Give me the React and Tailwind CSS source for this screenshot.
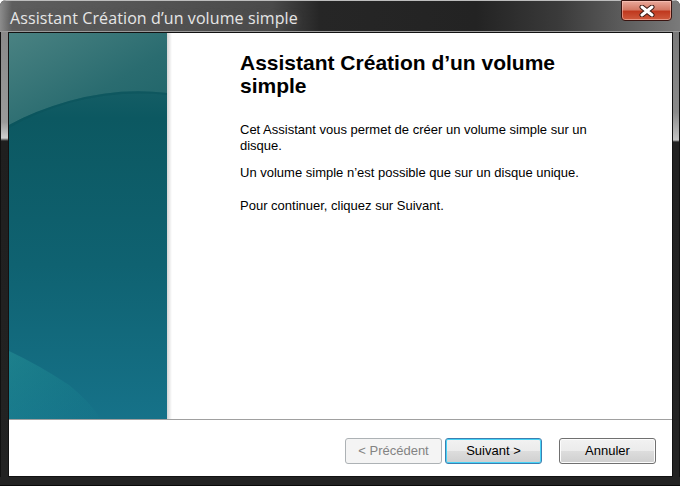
import React from 'react';

const winFont = { fontFamily: '"Liberation Sans", Arial, sans-serif' };

// ── Side panel drawing (teal glass) ─────────────────────────
function WizardArt() {
  return (
    <svg width="158" height="386" viewBox="0 0 158 386" className="block">
      <defs>
        <linearGradient id="base" x1="0" y1="0" x2="0" y2="1">
          <stop offset="0" stopColor="#25686d" />
          <stop offset="0.22" stopColor="#0c5861" />
          <stop offset="0.6" stopColor="#0f6271" />
          <stop offset="1" stopColor="#167289" />
        </linearGradient>
        <linearGradient id="top" x1="0" y1="0" x2="1" y2="1">
          <stop offset="0" stopColor="#4a8282" />
          <stop offset="0.6" stopColor="#2a6c70" />
          <stop offset="1" stopColor="#1e6469" />
        </linearGradient>
        <linearGradient id="low" x1="0" y1="0" x2="1" y2="1">
          <stop offset="0" stopColor="#2a9a9c" stopOpacity="0.45" />
          <stop offset="1" stopColor="#1a8f96" stopOpacity="0.05" />
        </linearGradient>
      </defs>
      <rect width="158" height="386" fill="url(#base)" />
      <path d="M0 0 H158 V60 Q110 54 60 68 Q25 78 0 92 Z" fill="url(#top)" />
      <path d="M0 92 Q25 78 60 68 Q110 54 158 60 V62 Q110 57 60 70 Q25 80 0 95 Z" fill="#0a5259" opacity="0.5" />
      <path d="M0 318 Q30 332 60 352 Q80 368 92 386 H0 Z" fill="url(#low)" />
    </svg>
  );
}

function CloseGlyph() {
  return (
    <svg width="16" height="12" viewBox="0 0 16 12">
      <path d="M3 2 L13 10 M13 2 L3 10" stroke="#3a1a14" strokeWidth="5" strokeLinecap="round" />
      <path d="M3 2 L13 10 M13 2 L3 10" stroke="#ffffff" strokeWidth="3" strokeLinecap="round" />
    </svg>
  );
}

function WinButton({ children, variant }) {
  const base = 'w-[97px] h-[26px] rounded-[3px] border text-[13px] flex items-center justify-center';
  if (variant === 'disabled')
    return <div className={`${base} border-[#adb2b5] bg-[#f4f4f4] text-[#838383]`}>{children}</div>;
  if (variant === 'default')
    return (
      <div className={`${base} border-[#3c7fb1] text-black bg-[linear-gradient(180deg,#f2f2f2_0%,#ebebeb_50%,#dddddd_50%,#cfcfcf_100%)] shadow-[inset_0_0_0_1px_#48d4f7]`}>
        {children}
      </div>
    );
  return (
    <div className={`${base} border-[#707070] text-black bg-[linear-gradient(180deg,#f2f2f2_0%,#ebebeb_50%,#dddddd_50%,#cfcfcf_100%)] shadow-[inset_0_0_0_1px_#fcfcfc]`}>
      {children}
    </div>
  );
}

export default function App() {
  return (
    <div className="w-[680px] h-[486px] flex flex-col bg-[#232323] rounded-t-[6px] overflow-hidden" style={winFont}>
      {/* ── Title bar ─────────────────────────────── */}
      <div className="h-[32px] flex items-start border-t border-[#bdbdbd] bg-[linear-gradient(90deg,#8c8c8c_0px,#5e5e5e_12px,#4a4a4a_40%,#262626_47%,#232323_70%,#3a3a3a_82%,#7a7a7a_100%)] border-b border-b-[#9a9a9a]">
        <div className="pl-[10px] pt-[5px] flex-1">
          <span
            className="text-[16px] text-[#e6e6e6] tracking-[0.1px]"
            style={{ fontFamily: '"Open Sans", sans-serif', textShadow: '0 0 6px #5a5a5a' }}
          >
            Assistant Création d’un volume simple
          </span>
        </div>
        <div className="mr-[8px] w-[51px] h-[21px] -mt-px rounded-b-[4px] border border-[#3a1410] flex items-center justify-center bg-[linear-gradient(180deg,#e9a99b_0%,#d47a66_45%,#c0391f_55%,#cf5b3e_100%)] shadow-[inset_0_0_0_1px_rgba(255,210,200,0.5)]">
          <CloseGlyph />
        </div>
      </div>

      {/* ── Body row ───────────────────────────────── */}
      <div className="h-[445px] flex">
        <div className="w-[8px] bg-[linear-gradient(180deg,#8a8a8a_0px,#9a9a9a_90px,#cfcfcf_106px,#1f1f1f_109px,#232323_100%)] border-l border-[#111]" />
        <div className="w-[665px] border border-[#121212] bg-white flex flex-col">
          <div className="h-[386px] flex">
            <WizardArt />
            <div className="w-[5px] bg-[linear-gradient(90deg,#d4d4d4,#ffffff)]" />
            <div className="flex-1 pl-[68px] pt-[18px] text-black">
              <h1 className="text-[21px] leading-[23px] font-bold w-[380px]">
                Assistant Création d’un volume simple
              </h1>
              <p className="mt-[25px] text-[13px] leading-[16px] w-[370px]">
                Cet Assistant vous permet de créer un volume simple sur un disque.
              </p>
              <p className="mt-[11px] text-[13px] leading-[16px]">
                Un volume simple n’est possible que sur un disque unique.
              </p>
              <p className="mt-[17px] text-[13px] leading-[16px]">Pour continuer, cliquez sur Suivant.</p>
            </div>
          </div>
          <div className="h-px bg-[#a0a0a0]" />
          <div className="flex-1 flex items-start justify-end pt-[18px] pr-[16px]">
            <WinButton variant="disabled">&lt; Précédent</WinButton>
            <div className="w-[3px]" />
            <WinButton variant="default">Suivant &gt;</WinButton>
            <div className="w-[17px]" />
            <WinButton>Annuler</WinButton>
          </div>
        </div>
        <div className="w-[7px] bg-[linear-gradient(180deg,#7a7a7a_0px,#8a8a8a_80px,#c4c4c4_108px,#222_110px,#232323_100%)] border-r border-[#111]" />
      </div>

      {/* ── Bottom frame ───────────────────────────── */}
      <div className="h-[9px] bg-[#232323] border-b border-[#0a0a0a]" />
    </div>
  );
}
